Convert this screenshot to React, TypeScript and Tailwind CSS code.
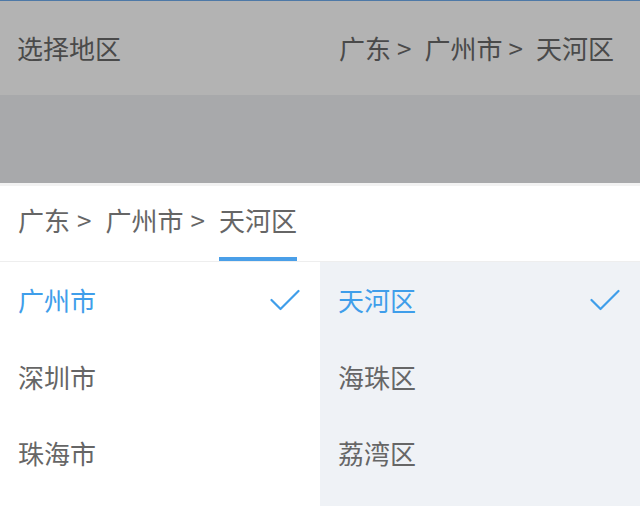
import { Fragment } from 'react';

const FONT = { fontFamily: '"Noto Sans CJK SC", "Noto Sans", sans-serif' };

const PATH = ['广东', '广州市', '天河区'];
const CITIES = ['广州市', '深圳市', '珠海市'];
const DISTRICTS = ['天河区', '海珠区', '荔湾区'];

function Check() {
  return (
    <svg width="30" height="22" viewBox="0 0 30 22" fill="none">
      <polyline
        points="1.5,11 10.5,20 28.5,2"
        stroke="#3f9eea"
        strokeWidth="2.2"
        strokeLinecap="round"
        strokeLinejoin="round"
      />
    </svg>
  );
}

function Crumbs({ active }: { active?: boolean }) {
  return (
    <div className="flex items-stretch">
      {PATH.map((p, i) => (
        <Fragment key={p}>
          {i > 0 && (
            <span className="flex items-center pl-[7px] pr-[14px] pb-[4px] border-b-4 border-transparent">&gt;</span>
          )}
          <span
            className={`flex items-center pb-[4px] border-b-4 ${
              active && i === PATH.length - 1 ? 'border-[#4a9fe8]' : 'border-transparent'
            }`}
          >
            {p}
          </span>
        </Fragment>
      ))}
    </div>
  );
}

function Column({ items, selected, className }: { items: string[]; selected: string; className: string }) {
  return (
    <ul className={`flex-1 ${className}`}>
      {items.map((it) => (
        <li key={it} className="h-[76.5px] flex items-center justify-between pl-[18px] pr-[20px]">
          <span className={it === selected ? 'text-[#3f9eea]' : 'text-[#666666]'}>{it}</span>
          {it === selected && <Check />}
        </li>
      ))}
    </ul>
  );
}

export default function App() {
  return (
    <div className="w-[640px] h-[506px] overflow-hidden bg-white text-[26px] leading-none" style={FONT}>
      <div className="h-px bg-[#4e79a7]" />
      <div className="h-[94px] bg-[#b3b3b3] flex items-center justify-between pl-[17px] pr-[26px] text-[#4a4a4a]">
        <span>选择地区</span>
        <div className="flex">
          {PATH.map((p, i) => (
            <Fragment key={p}>
              {i > 0 && <span className="pl-[6px] pr-[13px]">&gt;</span>}
              <span>{p}</span>
            </Fragment>
          ))}
        </div>
      </div>
      <div className="h-[88px] bg-[#a8a9ab]" />
      <div className="h-[3px] bg-[#f2f2f2]" />
      <div className="h-[76px] flex px-[18px] border-b border-[#eeeeee] text-[#666666]">
        <Crumbs active />
      </div>
      <div className="flex h-[244px]">
        <Column items={CITIES} selected="广州市" className="bg-white" />
        <Column items={DISTRICTS} selected="天河区" className="bg-[#eff2f6]" />
      </div>
    </div>
  );
}
